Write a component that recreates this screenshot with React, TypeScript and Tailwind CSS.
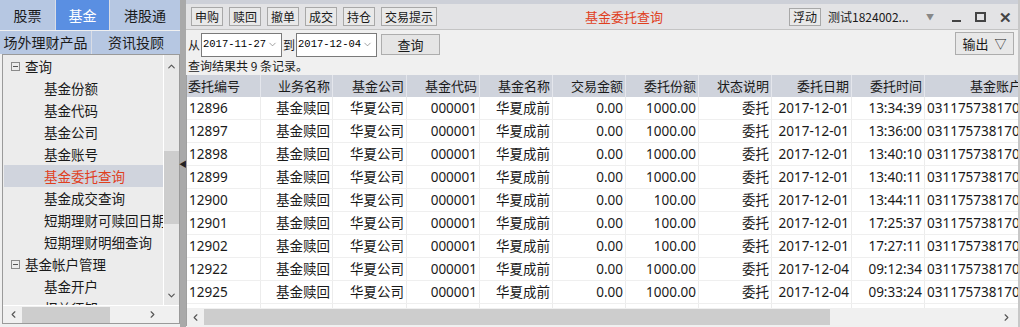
import { ChevronLeft, ChevronRight, ChevronUp, ChevronDown } from 'lucide-react';

const ROWS = [
  { id: '12896', share: '1000.00', date: '2017-12-01', time: '13:34:39' },
  { id: '12897', share: '1000.00', date: '2017-12-01', time: '13:36:00' },
  { id: '12898', share: '1000.00', date: '2017-12-01', time: '13:40:10' },
  { id: '12899', share: '1000.00', date: '2017-12-01', time: '13:40:11' },
  { id: '12900', share: '100.00',  date: '2017-12-01', time: '13:44:11' },
  { id: '12901', share: '100.00',  date: '2017-12-01', time: '17:25:37' },
  { id: '12902', share: '100.00',  date: '2017-12-01', time: '17:27:11' },
  { id: '12922', share: '1000.00', date: '2017-12-04', time: '09:12:34' },
  { id: '12925', share: '1000.00', date: '2017-12-04', time: '09:33:24' },
];

const COLS = [
  { title: '委托编号', w: 'w-[74px]', left: true },
  { title: '业务名称', w: 'w-[72px]' },
  { title: '基金公司', w: 'w-[74px]' },
  { title: '基金代码', w: 'w-[73px]' },
  { title: '基金名称', w: 'w-[73px]' },
  { title: '交易金额', w: 'w-[73px]' },
  { title: '委托份额', w: 'w-[73px]' },
  { title: '状态说明', w: 'w-[73px]' },
  { title: '委托日期', w: 'w-[80px]' },
  { title: '委托时间', w: 'w-[73px]' },
  { title: '基金账户', w: 'w-[100px]' },
];

const TREE = [
  { label: '查询', group: true },
  { label: '基金份额' },
  { label: '基金代码' },
  { label: '基金公司' },
  { label: '基金账号' },
  { label: '基金委托查询', active: true },
  { label: '基金成交查询' },
  { label: '短期理财可赎回日期' },
  { label: '短期理财明细查询' },
  { label: '基金帐户管理', group: true },
  { label: '基金开户' },
  { label: '权益须知' },
];

const TOOLS = ['申购', '赎回', '撤单', '成交', '持仓', '交易提示'];

function MinusBox() {
  return (
    <span className="w-[9px] h-[9px] border border-[#8a8a8a] flex items-center justify-center shrink-0">
      <span className="w-[5px] h-px bg-[#555]" />
    </span>
  );
}

function DateBox({ value }: { value: string }) {
  return (
    <div className="w-[81px] h-[24px] bg-white border border-[#7a7a7a] flex items-center pl-px pr-[3px]">
      <span className="font-['Liberation_Mono',monospace] text-[10.5px] text-black flex-1 whitespace-nowrap min-w-0">{value}</span>
      <ChevronDown size={11} strokeWidth={1.5} className="text-[#777] shrink-0" />
    </div>
  );
}

export default function App() {
  const cells = (r: typeof ROWS[number]) => [
    r.id, '基金赎回', '华夏公司', '000001', '华夏成前', '0.00', r.share, '委托', r.date, r.time, '031175738170',
  ];

  return (
    <div className="w-[1020px] h-[327px] overflow-hidden flex bg-[#f0f0f0] font-['Noto_Sans_CJK_SC','Noto_Sans',sans-serif] text-[#1a1a1a]">

      {/* Left nav */}
      <div className="w-[180px] flex flex-col shrink-0">
        <div className="flex h-[30px] bg-[#d9dde6]">
          <div className="w-[55px] mr-px bg-[#b6c7e2] flex items-center justify-center text-[14px]">股票</div>
          <div className="w-[53px] mr-px bg-[#5a8fe2] text-white flex items-center justify-center text-[14px]">基金</div>
          <div className="flex-1 bg-[#b6c7e2] flex items-center justify-center text-[14px]">港股通</div>
        </div>
        <div className="flex h-[23px] bg-[#d9dde6] mt-px">
          <div className="w-[91px] mr-px bg-[#b6c7e2] flex items-center justify-center text-[14px]">场外理财产品</div>
          <div className="flex-1 bg-[#b6c7e2] flex items-center justify-center text-[14px]">资讯投顾</div>
        </div>
        <div className="flex-1 ml-[2px] border border-[#9a9a9a] bg-[#ececec] flex flex-col min-h-0">
          <div className="flex flex-1 min-h-0">
            <div className="flex-1 overflow-hidden pt-0 pl-[1px]">
              {TREE.map((t) => (
                <div
                  key={t.label}
                  className={`h-[22px] flex items-center whitespace-nowrap text-[13.5px] ${t.group ? 'pl-[7px] gap-[5px]' : 'pl-[40px]'} ${t.active ? 'bg-[#d0d4dd] text-[#e0401e]' : ''}`}
                >
                  {t.group && <MinusBox />}
                  {t.label}
                </div>
              ))}
            </div>
            <div className="w-[16px] bg-[#e8e8e8] flex flex-col items-center border-l border-white">
              <ChevronUp size={11} strokeWidth={2.5} className="text-[#555] mt-[6px]" />
              <div className="w-[15px] h-[73px] bg-[#cdcdcd] mt-[79px]" />
              <div className="flex-1" />
              <ChevronDown size={11} strokeWidth={2.5} className="text-[#555] mb-[4px]" />
            </div>
          </div>
          <div className="h-[18px] bg-[#f0f0f0] flex items-center border-t border-white">
            <ChevronLeft size={11} strokeWidth={2.5} className="text-[#555] ml-[5px]" />
            <div className="w-[88px] h-[16px] bg-[#cdcdcd] ml-[3px]" />
            <div className="flex-1" />
            <ChevronRight size={11} strokeWidth={2.5} className="text-[#555] mr-[21px]" />
          </div>
        </div>
        <div className="h-[3px]" />
      </div>

      {/* Splitter */}
      <div className="w-[6px] bg-[#a9a9a9] flex items-start justify-center shrink-0 pt-[160px]">
        <span className="text-[8px] leading-none text-[#222]">◀</span>
      </div>

      {/* Right */}
      <div className="flex-1 flex flex-col min-w-0 border-r-2 border-[#c8c8c8]">
        <div className="h-[4px] bg-[#cdd0d8]" />
        <div className="h-[26px] bg-[#e3e3e5] border-b border-[#c4c4c4] flex items-center pl-[5px] pr-[6px] gap-[6px]">
          {TOOLS.map((t) => (
            <div key={t} className="h-[19px] px-[3px] border border-[#a8a8a8] bg-[#e9e9e9] flex items-center text-[12px] leading-none">{t}</div>
          ))}
          <div className="flex-1 text-center text-[13px] text-[#e0401e] pl-[22px]">基金委托查询</div>
          <div className="h-[18px] px-[3px] border border-[#a8a8a8] bg-[#e9e9e9] flex items-center text-[12px] leading-none">浮动</div>
          <div className="text-[12px] ml-[1px] w-[92px]">测试1824002...</div>
          <span className="text-[8px] text-[#888] w-[16px]">▼</span>
          <span className="w-[9px] h-[2px] bg-[#444] self-end mb-[7px] ml-[4px]" />
          <span className="w-[11px] h-[10px] border-2 border-[#444] ml-[8px]" />
          <span className="text-[15px] font-bold text-[#444] ml-[7px] leading-none">✕</span>
        </div>

        <div className="h-[29px] flex items-center pl-[2px] pr-[4px]">
          <span className="text-[12px] mr-px">从</span>
          <DateBox value="2017-11-27" />
          <span className="text-[12px] mx-px">到</span>
          <DateBox value="2017-12-04" />
          <div className="ml-[4px] w-[59px] h-[21px] border border-[#adadad] bg-[#e5e5e5] flex items-center justify-center text-[13px] self-start mt-[4px]">查询</div>
          <div className="flex-1" />
          <div className="w-[59px] h-[23px] border border-[#adadad] bg-[#e8e8e8] flex items-center justify-center text-[13px] self-start mt-[2px] gap-[6px]">
            输出 <span className="text-[12px]">▽</span>
          </div>
        </div>

        <div className="h-[16px] pl-[2px] text-[12px] leading-[14px] whitespace-pre">查询结果共 9 条记录。</div>

        {/* Table */}
        <div className="flex-1 min-h-0 bg-white border-l border-[#a0a0a0] overflow-hidden font-['Noto_Sans','Noto_Sans_CJK_SC',sans-serif]">
          <div className="flex h-[22px] bg-[#cfd3dc] whitespace-nowrap">
            {COLS.map((c) => (
              <div key={c.title} className={`${c.w} shrink-0 border-r border-[#e4e6ec] flex items-center text-[13px] ${c.left ? 'pl-[1px]' : 'justify-end pr-[2px]'} font-['Noto_Sans_CJK_SC',sans-serif]`}>
                {c.title}
              </div>
            ))}
          </div>
          {ROWS.map((r) => (
            <div key={r.id} className="flex h-[23px] border-b border-[#efefef] whitespace-nowrap">
              {cells(r).map((v, i) => (
                <div key={i} className={`${COLS[i].w} shrink-0 border-r border-[#ececec] flex items-center text-[13.5px] overflow-hidden ${i === 0 || i === 10 ? 'pl-[2px]' : 'justify-end pr-[2px]'}`}>
                  {v}
                </div>
              ))}
            </div>
          ))}
          <div className="flex h-[23px]">
            {COLS.map((c) => (
              <div key={c.title} className={`${c.w} shrink-0 border-r border-[#ececec]`} />
            ))}
          </div>
        </div>

        <div className="h-[18px] bg-[#f0f0f0] flex items-center border-l border-[#a0a0a0]">
          <ChevronLeft size={11} strokeWidth={2.5} className="text-[#555] ml-[3px]" />
          <div className="w-[626px] h-[16px] bg-[#cdcdcd] ml-[3px]" />
          <div className="flex-1" />
          <ChevronRight size={11} strokeWidth={2.5} className="text-[#555] mr-[6px]" />
        </div>
        <div className="h-[1px]" />
      </div>
    </div>
  );
}
